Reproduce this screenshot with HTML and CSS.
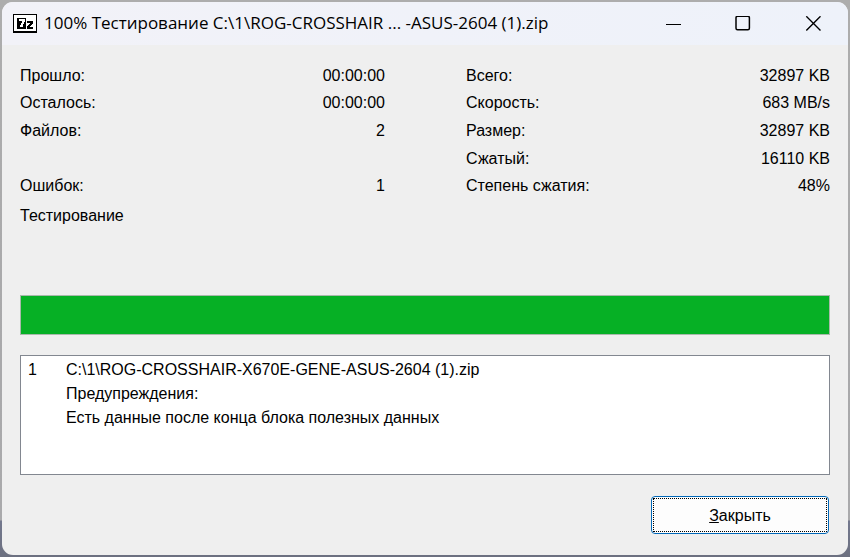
FILE: index.html
```html
<!DOCTYPE html>
<html lang="ru">
<head>
<meta charset="utf-8">
<title>100% Тестирование</title>
<link rel="stylesheet" href="styles.css">
</head>
<body>
<main class="window">
  <header class="titlebar">
    <svg class="app-icon" viewBox="0 0 24 19" shape-rendering="crispEdges" aria-hidden="true">
      <rect width="24" height="19" fill="#000"/>
      <rect x="1" y="1" width="22" height="16" fill="#fff"/>
      <rect x="4" y="4" width="9" height="11" fill="#000"/>
      <path d="M6 5h6v3h-1v2h-1v3H7v-2h1V9h1V7H6z" fill="#fff"/>
      <path d="M14 7h6v3h-1v1h-1v1h-1v1h3v2h-6v-3h1v-1h1v-1h1V9h-3z" fill="#000"/>
    </svg>
    <h1 class="title">100% Тестирование C:\1\ROG-CROSSHAIR ... -ASUS-2604 (1).zip</h1>
    <div class="controls">
      <button class="control" type="button" aria-label="Свернуть">
        <svg viewBox="0 0 16 16"><path d="M1 8.5h15" shape-rendering="crispEdges"/></svg>
      </button>
      <button class="control" type="button" aria-label="Развернуть">
        <svg viewBox="0 0 16 16"><rect x="1" y=".3" width="13.4" height="13.4" rx="1.5" stroke-width="1.5"/></svg>
      </button>
      <button class="control" type="button" aria-label="Закрыть окно">
        <svg viewBox="0 0 16 16"><path d="M1.3.3l14.2 14.2M15.5.3L1.3 14.5" stroke-width="1.4"/></svg>
      </button>
    </div>
  </header>
  <div class="content">
    <div class="stats">
      <dl class="stat-list">
        <dt>Прошло:</dt><dd>00:00:00</dd>
        <dt>Осталось:</dt><dd>00:00:00</dd>
        <dt>Файлов:</dt><dd>2</dd>
        <dt class="last">Ошибок:</dt><dd class="last">1</dd>
      </dl>
      <dl class="stat-list">
        <dt>Всего:</dt><dd>32897 KB</dd>
        <dt>Скорость:</dt><dd>683 MB/s</dd>
        <dt>Размер:</dt><dd>32897 KB</dd>
        <dt>Сжатый:</dt><dd>16110 KB</dd>
        <dt>Степень сжатия:</dt><dd>48%</dd>
      </dl>
    </div>
    <label class="status" for="progress">Тестирование</label>
    <progress class="progress" id="progress" value="100" max="100"></progress>
    <div class="messages">
      <table class="message-table">
        <tbody>
          <tr><td class="number">1</td><td>C:\1\ROG-CROSSHAIR-X670E-GENE-ASUS-2604 (1).zip</td></tr>
          <tr><td class="number"></td><td>Предупреждения:</td></tr>
          <tr><td class="number"></td><td>Есть данные после конца блока полезных данных</td></tr>
        </tbody>
      </table>
    </div>
    <button class="close" type="button"><span class="close-focus"><span><u>З</u>акрыть</span></span></button>
  </div>
</main>
</body>
</html>
```
FILE: styles.css
```css
* {
  box-sizing: border-box;
}

body {
  margin: 0;
  min-height: 100vh;
  padding: 2px;
  display: flex;
  background: linear-gradient(#adadad 0, #a9a9ab 370px, #aaaaac 520px, #73788e 521px, #6c7080 100%);
  color: #000;
  font: 16px/20px "Liberation Sans", Arial, sans-serif;
}

.window {
  flex: 1;
  min-width: 0;
  display: flex;
  flex-direction: column;
  border-radius: 11px;
  overflow: hidden;
  background: #efefef;
}

.titlebar {
  display: flex;
  align-items: center;
  height: 43px;
  padding-left: 11px;
  background: linear-gradient(90deg, #f2f2f8, #eef2fa);
}

.app-icon {
  flex: none;
  width: 24px;
  height: 19px;
}

.title {
  flex: 1;
  min-width: 0;
  margin: 0 0 0 7px;
  padding-bottom: 2px;
  overflow: hidden;
  white-space: nowrap;
  font: 17px/24px "Open Sans", "Noto Sans", sans-serif;
}

.controls {
  display: flex;
  align-self: stretch;
}

.control {
  display: flex;
  align-items: center;
  justify-content: center;
  width: 70px;
  padding: 0;
  border: 0;
  background: none;
}

.control svg {
  width: 16px;
  height: 16px;
  fill: none;
  stroke: #000;
}

.content {
  flex: 1;
  display: flex;
  flex-direction: column;
  padding: 17px 18px 21px;
}

.stats {
  display: grid;
  grid-template-columns: 365fr 364fr;
  column-gap: 81px;
}

.stat-list {
  display: grid;
  grid-template-columns: 1fr auto;
  grid-template-rows: repeat(5, 1fr);
  align-items: center;
  height: 138px;
  margin: 0;
}

.stat-list dd {
  margin: 0;
  text-align: right;
}

.stat-list .last {
  grid-row: 5;
}

.status {
  margin-top: 6px;
  min-height: 89px;
}

.progress {
  appearance: none;
  display: block;
  width: 100%;
  height: 40px;
  border: 1px solid #a9b9ab;
  background: #e6e6e6;
}

.progress::-webkit-progress-bar {
  background: #e6e6e6;
}

.progress::-webkit-progress-value {
  background: #06b025;
}

.messages {
  flex: 1;
  margin-top: 20px;
  padding-top: 2px;
  border: 1px solid #828790;
  background: #fff;
}

.message-table {
  border-collapse: collapse;
  line-height: 24px;
}

.message-table td {
  height: 24px;
  padding: 0;
}

.message-table .number {
  width: 45px;
  padding-left: 7px;
}

.close {
  align-self: flex-end;
  width: 178px;
  height: 38px;
  margin: 21px 1px 0 0;
  padding: 1px;
  border: 1px solid #0067b8;
  border-radius: 4px;
  background: #fdfdfd;
  color: #000;
  font: inherit;
}

.close-focus {
  display: flex;
  align-items: center;
  justify-content: center;
  height: 100%;
  padding-top: 2px;
  border: 1px dotted #000;
}
```
